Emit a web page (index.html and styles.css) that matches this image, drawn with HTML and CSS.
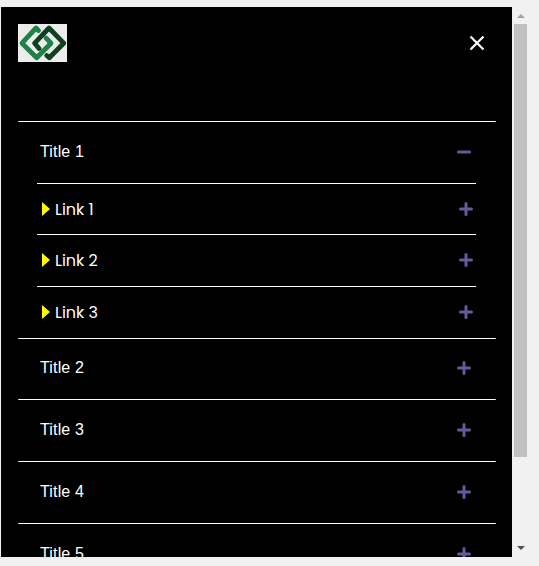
FILE: index.html
```html
<!DOCTYPE html>
<html lang="en">
<head>
<meta charset="utf-8">
<title>Menu</title>
<link rel="stylesheet" href="styles.css">
</head>
<body>
<svg class="sprite" aria-hidden="true">
  <symbol id="plus" viewBox="0 0 14 14"><path d="M1.5 7H12.5M7 1.5V12.5"/></symbol>
  <symbol id="minus" viewBox="0 0 14 14"><path d="M1.5 7H12.5"/></symbol>
</svg>
<div class="frame">
  <div class="panel">
    <header class="header">
      <svg class="logo" viewBox="0 0 49 38">
        <path class="logo-light" d="M20.5 6.5L18 4L4 19.2L18.7 33.8L33 19.2L28 14"/>
        <path class="logo-dark" d="M21 24.5L16.7 19.2L31 4L45.7 19.2L31.3 33.8L28.8 31.5"/>
      </svg>
      <svg class="close" viewBox="0 0 16 16"><path d="M1.5 1.5L14.5 14.5M14.5 1.5L1.5 14.5"/></svg>
    </header>
    <nav class="menu">
      <section class="group">
        <div class="title"><span>Title 1</span><svg class="toggle"><use href="#minus"/></svg></div>
        <ul class="links">
          <li class="link"><span class="arrow"></span><span class="label">Link 1</span><svg class="toggle"><use href="#plus"/></svg></li>
          <li class="link"><span class="arrow"></span><span class="label">Link 2</span><svg class="toggle"><use href="#plus"/></svg></li>
          <li class="link"><span class="arrow"></span><span class="label">Link 3</span><svg class="toggle"><use href="#plus"/></svg></li>
        </ul>
      </section>
      <section class="group"><div class="title"><span>Title 2</span><svg class="toggle"><use href="#plus"/></svg></div></section>
      <section class="group"><div class="title"><span>Title 3</span><svg class="toggle"><use href="#plus"/></svg></div></section>
      <section class="group"><div class="title"><span>Title 4</span><svg class="toggle"><use href="#plus"/></svg></div></section>
      <section class="group"><div class="title"><span>Title 5</span><svg class="toggle"><use href="#plus"/></svg></div></section>
    </nav>
  </div>
  <div class="scrollbar">
    <svg class="scroll-arrow up" viewBox="0 0 8 4"><path d="M0 4L4 0L8 4Z"/></svg>
    <div class="thumb"></div>
    <svg class="scroll-arrow down" viewBox="0 0 8 4"><path d="M0 0H8L4 4Z"/></svg>
  </div>
</div>
</body>
</html>
```
FILE: styles.css
```css
* { box-sizing: border-box; }
body {
  margin: 0;
  height: 566px;
  padding: 7px 0 0 1px;
  overflow: hidden;
  background: #f1f1f1;
  color: #fff;
  font: 16px/20px "Liberation Sans", Arial, sans-serif;
}
.sprite { display: none; }
.frame { display: flex; width: 528px; height: 550px; }
.panel {
  flex: none;
  width: 511px;
  padding: 17px 16px 0 17px;
  overflow: hidden;
  background: #000;
}
.header {
  display: flex;
  justify-content: space-between;
  height: 97px;
  padding-right: 11px;
}
.logo {
  width: 49px;
  height: 38px;
  background: #ececec;
  fill: none;
  stroke-width: 4.8;
  stroke-linecap: round;
  stroke-linejoin: round;
}
.logo-light { stroke: #208048; }
.logo-dark { stroke: #104020; }
.close {
  width: 16px;
  height: 16px;
  margin-top: 11px;
  fill: none;
  stroke: #fff;
  stroke-width: 2.2;
}
.group { border-top: 1px solid #fff; border-radius: 1px; }
.title {
  display: flex;
  align-items: center;
  justify-content: space-between;
  height: 61px;
  padding: 0 25px 1px 22px;
  letter-spacing: 0.15px;
}
.group:nth-child(2) .title { height: 60px; padding-bottom: 2px; }
.toggle {
  width: 14px;
  height: 14px;
  fill: none;
  stroke: #635b9b;
  stroke-width: 3;
  stroke-linecap: round;
}
.links { margin: 0; padding: 0 20px 0 19px; list-style: none; }
.link {
  display: flex;
  align-items: center;
  height: 52px;
  padding: 0 3px 1px 5px;
  border-top: 1px solid #fff;
  font: 16px/20px Poppins, Inter, sans-serif;
}
.link:first-child { height: 51px; padding-bottom: 0; }
.label { padding-top: 1px; }
.link .toggle { margin-left: auto; }
.arrow {
  width: 8px;
  height: 14px;
  margin-right: 5px;
  background: #ff0;
  clip-path: polygon(0 0, 100% 50%, 0 100%);
}
.scrollbar {
  display: flex;
  flex: none;
  flex-direction: column;
  align-items: center;
  width: 17px;
  padding: 7px 0;
}
.thumb { width: 13px; height: 433px; margin-top: 6px; background: #c1c1c1; }
.scroll-arrow { width: 8px; height: 4px; }
.up { fill: #a3a3a3; }
.down { margin-top: auto; fill: #505050; }
```
